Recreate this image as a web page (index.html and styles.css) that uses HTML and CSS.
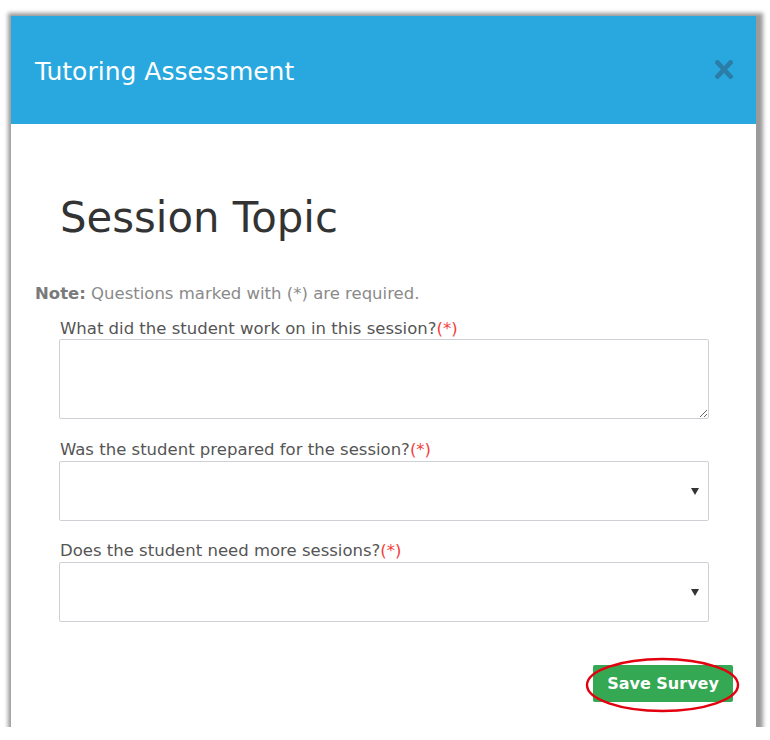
FILE: index.html
```html
<!DOCTYPE html>
<html>
<head>
<meta charset="utf-8">
<link rel="stylesheet" href="styles.css">
</head>
<body>
<div class="frame">
  <div class="header">
    <div class="title">Tutoring Assessment</div>
    <svg class="close" width="18" height="19" viewBox="0 0 18 19"><path d="M2.5 2.5 L15.5 16.5 M15.5 2.5 L2.5 16.5" stroke="#2b7ca6" stroke-width="4.6" stroke-linecap="square"/></svg>
  </div>
  <div class="content">
    <h1 class="topic">Session Topic</h1>
    <p class="note"><b>Note:</b> Questions marked with (*) are required.</p>
    <div class="field">
      <label class="label">What did the student work on in this session?<span class="req">(*)</span></label>
      <textarea class="textarea"></textarea>
    </div>
    <div class="field">
      <label class="label">Was the student prepared for the session?<span class="req">(*)</span></label>
      <div class="select"><span class="arrow"></span></div>
    </div>
    <div class="field field-last">
      <label class="label">Does the student need more sessions?<span class="req">(*)</span></label>
      <div class="select"><span class="arrow"></span></div>
    </div>
    <div class="actions">
      <div class="btn-wrap">
        <button class="btn">Save Survey</button>
        <svg class="ring" width="155" height="56" viewBox="0 0 155 56"><ellipse cx="77.5" cy="28" rx="75.5" ry="26" fill="none" stroke="#e3000f" stroke-width="2.4"/></svg>
      </div>
    </div>
  </div>
</div>
</body>
</html>
```

FILE: styles.css
```css
html, body {
  margin: 0;
  padding: 0;
  background: #fff;
}
body {
  font-family: "DejaVu Sans", Verdana, sans-serif;
}
.frame {
  width: 745px;
  height: 711px;
  margin: 16px 0 0 11px;
  background: #fff;
  box-shadow: 2px 2px 4px 5px #9a9a9a;
  display: flex;
  flex-direction: column;
}
.header {
  height: 108px;
  background: #29a8e0;
  display: flex;
  align-items: center;
  justify-content: space-between;
  padding: 0 23px 0 24px;
  flex: none;
}
.title {
  color: #fff;
  font-size: 25px;
  line-height: 30px;
  margin-top: 3px;
}
.close {
  display: block;
  margin-top: -2px;
}
.content {
  flex: 1;
  padding: 0 47px 0 24px;
  display: flex;
  flex-direction: column;
}
.topic {
  margin: 70px 0 0 25px;
  font-size: 41.8px;
  line-height: 48px;
  font-weight: normal;
  color: #333;
}
.note {
  margin: 42px 0 0 0;
  font-size: 16.5px;
  line-height: 19px;
  color: #8a8a8a;
}
.note b {
  color: #7a7a7a;
}
.field {
  display: flex;
  flex-direction: column;
  margin: 16px 0 0 24px;
}
.field + .field {
  margin-top: 21px;
}
.field-last.field {
  margin-top: 20px;
}
.label {
  font-size: 16.5px;
  line-height: 19px;
  color: #555;
  margin-left: 1px;
  margin-bottom: 1px;
}
.req {
  color: #f23c3c;
}
.textarea {
  height: 80px;
  box-sizing: border-box;
  border: 1px solid #cfcfd6;
  border-radius: 2px;
  margin: 0;
  resize: vertical;
  font-family: inherit;
}
.select {
  height: 60px;
  box-sizing: border-box;
  border: 1px solid #cfcfd6;
  border-radius: 2px;
  margin-top: 1px;
  display: flex;
  align-items: center;
  justify-content: flex-end;
  padding-right: 9px;
}
.arrow {
  width: 0;
  height: 0;
  border-left: 4px solid transparent;
  border-right: 4px solid transparent;
  border-top: 7px solid #333;
  margin-top: 1px;
}
.actions {
  display: flex;
  justify-content: flex-end;
  margin: 43px -24px 0 0;
}
.btn-wrap {
  position: relative;
}
.btn {
  display: block;
  width: 140px;
  height: 37px;
  border: none;
  border-radius: 2px;
  background: #35a853;
  color: #fff;
  font-family: "DejaVu Sans", Verdana, sans-serif;
  font-weight: bold;
  font-size: 16px;
  padding: 0;
}
.ring {
  position: absolute;
  left: -8px;
  top: -8px;
  pointer-events: none;
}
```
